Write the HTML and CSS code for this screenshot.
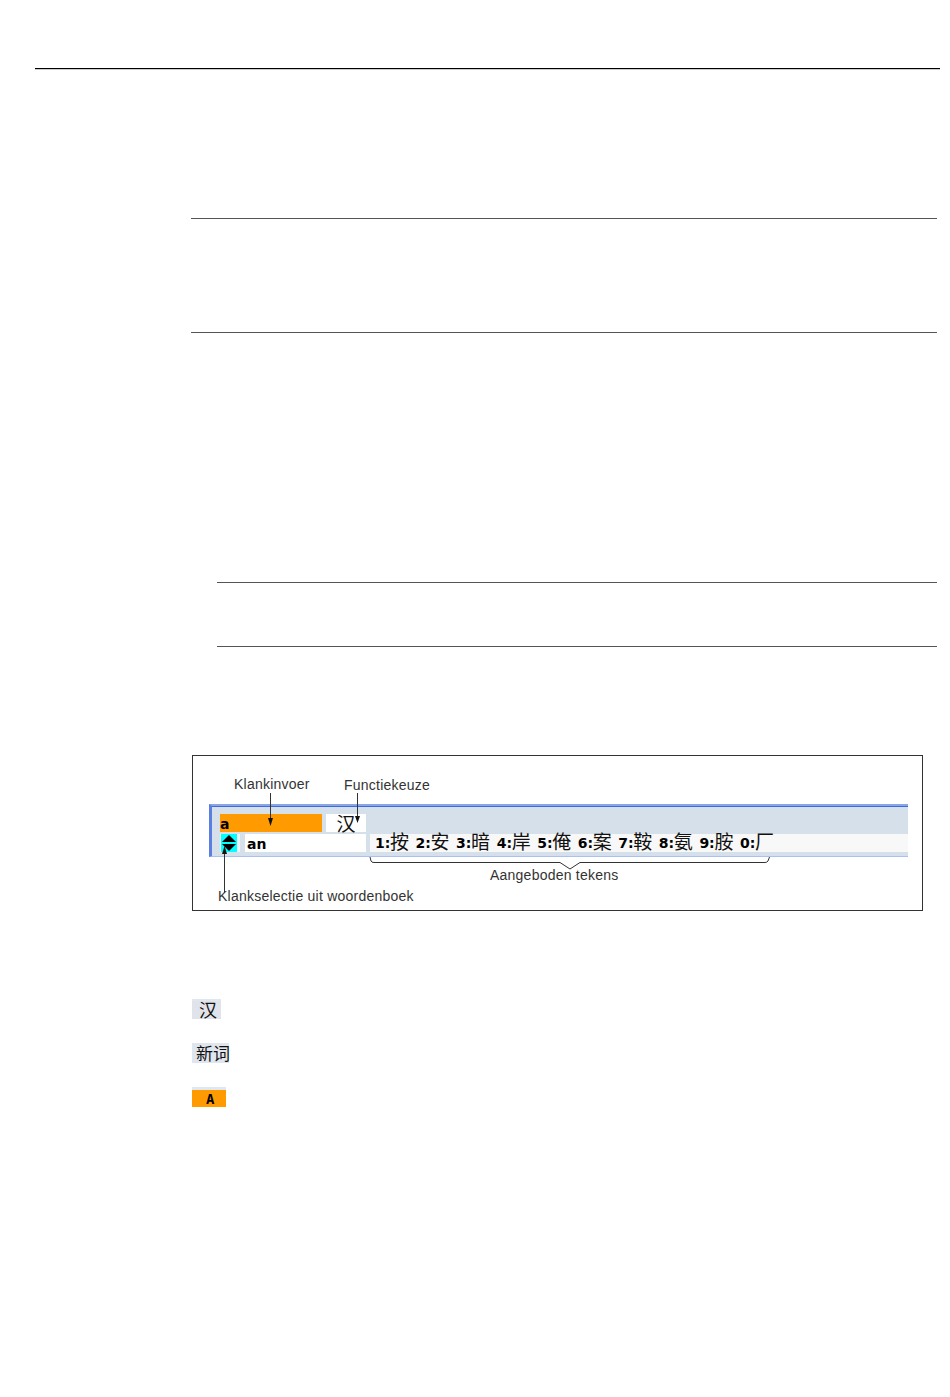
FILE: index.html
```html
<!DOCTYPE html>
<html lang="nl">
<head>
    <meta charset="UTF-8">
    <title>Klankinvoer</title>
    <link rel="stylesheet" href="styles.css">
</head>
<body>
    <hr class="rule rule-top">
    <div class="content">
        <hr class="rule rule-a">
        <hr class="rule rule-b">
        <hr class="rule rule-c">
        <hr class="rule rule-d">

        <div class="figure">
            <div class="ime-bar">
                <div class="ime-row">
                    <div class="pinyin-input">a</div>
                    <div class="func-select">汉</div>
                </div>
                <div class="ime-row ime-row-low">
                    <div class="spin-cell">
                        <svg class="spin" width="16" height="18" viewBox="0 0 16 18">
                            <rect width="16" height="18" fill="#00ffff"/>
                            <path d="M8 1 15 8H1Z" fill="#000"/>
                            <path d="M1 10H15L8 17Z" fill="#000"/>
                        </svg>
                    </div>
                    <div class="sound-field">an</div>
                    <div class="candidates">
                        <span class="cand"><b>1:</b>按</span>
                        <span class="cand"><b>2:</b>安</span>
                        <span class="cand"><b>3:</b>暗</span>
                        <span class="cand"><b>4:</b>岸</span>
                        <span class="cand"><b>5:</b>俺</span>
                        <span class="cand"><b>6:</b>案</span>
                        <span class="cand"><b>7:</b>鞍</span>
                        <span class="cand"><b>8:</b>氨</span>
                        <span class="cand"><b>9:</b>胺</span>
                        <span class="cand"><b>0:</b>厂</span>
                    </div>
                </div>
            </div>

            <svg class="callouts" width="730" height="155" viewBox="0 0 730 155">
                <g fill="none" stroke="#333" stroke-width="1">
                    <path d="M77.500 37V64"/>
                    <path d="M164.500 37V61"/>
                    <path d="M31.500 137V98"/>
                    <path d="M177 101 178 105Q178.500 106.500 181 106.500H367L377 113 387 106.500H572Q574 106.500 575 105L576.500 101"/>
                </g>
                <g fill="#111">
                    <path d="M75 62H80L77.500 70Z"/>
                    <path d="M162 60H167L164.500 67Z"/>
                    <path d="M29 98H34L31.500 90Z"/>
                </g>
            </svg>

            <span class="label label-klank">Klankinvoer</span>
            <span class="label label-func">Functiekeuze</span>
            <span class="label label-tekens">Aangeboden tekens</span>
            <span class="label label-select">Klankselectie uit woordenboek</span>
        </div>

        <div class="key key-han"><span>汉</span></div>
        <div class="key key-word"><span>新词</span></div>
        <div class="key key-alpha"><span>A</span></div>
    </div>
</body>
</html>
```

FILE: styles.css
```css
html, body {
    margin: 0;
    background-color: #fff;
}
body {
    padding-top: 68px;
    height: 1329px;
    overflow: hidden;
    font-family: "Liberation Sans", "Noto Sans CJK SC", sans-serif;
    color: #333;
}
.rule {
    display: block;
    margin: 0;
    border: none;
    height: 1px;
    background-color: #555;
}
.rule-top {
    margin-left: 35px;
    width: 905px;
    background-color: #000;
    box-shadow: 0 1px 0 #ccc;
}
.content {
    margin-left: 191px;
    width: 746px;
}
.rule-a {
    margin-top: 149px;
}
.rule-b {
    margin-top: 113px;
}
.rule-c {
    margin-top: 249px;
    margin-left: 26px;
}
.rule-d {
    margin-top: 63px;
    margin-left: 26px;
}

/* figure */
.figure {
    position: relative;
    box-sizing: border-box;
    margin-top: 108px;
    margin-left: 1px;
    width: 731px;
    height: 156px;
    padding: 48px 14px 0 16px;
    border: 1px solid #333;
}
.ime-bar {
    box-sizing: border-box;
    height: 53px;
    padding: 8px 0 0 8px;
    background-color: #d6e0ea;
    border-top: 2px solid #8aa6e6;
    border-left: 3px solid #5b7fe0;
    border-bottom: 1px solid #a9c0f0;
    box-shadow: inset 0 1px 0 #3f6be0;
}
.ime-row {
    display: flex;
    height: 18px;
}
.ime-row-low {
    margin-top: 2px;
}
.pinyin-input {
    width: 102px;
    margin-right: 4px;
    background-color: #ff9b00;
    color: #000;
    font: bold 14px/20px "DejaVu Sans", sans-serif;
}
.func-select {
    width: 40px;
    background-color: #fff;
    color: #111;
    text-align: center;
    font: 400 19px/17px "Noto Sans CJK SC", sans-serif;
}
.spin-cell {
    width: 20px;
    padding-left: 1px;
    box-sizing: border-box;
    background-color: #f0f4f8;
}
.spin {
    display: block;
}
.sound-field {
    width: 119px;
    margin-left: 5px;
    padding-left: 2px;
    background-color: #fff;
    color: #000;
    font: bold 14px/20px "DejaVu Sans", sans-serif;
}
.candidates {
    display: flex;
    flex: 1;
    margin-left: 4px;
    padding-left: 5px;
    background-color: #f8f8f8;
    color: #111;
    font: 400 19px/14px "Noto Sans CJK SC", sans-serif;
}
.cand {
    display: flex;
    width: 40.550px;
}
.cand b {
    color: #000;
    font: bold 14px/18px "DejaVu Sans", sans-serif;
    width: 15px;
}

/* callouts lie over the bar */
.callouts {
    position: absolute;
    left: 0;
    top: 0;
}
.label {
    position: absolute;
    font-size: 14px;
    line-height: 16px;
    letter-spacing: 0.23px;
    white-space: nowrap;
}
.label-klank {
    left: 41px;
    top: 20px;
}
.label-func {
    left: 151px;
    top: 21px;
}
.label-tekens {
    left: 297px;
    top: 111px;
}
.label-select {
    left: 25px;
    top: 132px;
}

/* keys */
.key {
    display: flex;
    align-items: center;
    margin-left: 1px;
    height: 20px;
    box-sizing: border-box;
    color: #111;
    white-space: nowrap;
    font: 400 18px/20px "Noto Sans CJK SC", sans-serif;
}
.key-han {
    margin-top: 88px;
    width: 29px;
    padding-left: 7px;
    background-color: #e0e3ea;
    box-shadow: inset 0 2px 0 #dfe7f0;
}
.key-word {
    margin-top: 24px;
    width: 37px;
    padding-left: 4px;
    font-size: 17px;
    background-color: #e0e6ee;
}
.key-alpha {
    margin-top: 24px;
    width: 34px;
    padding-left: 14px;
    border-top: 3px solid #dfe7f0;
    background-color: #ff9b00;
    color: #000;
    font: bold 14px/16px "DejaVu Sans Mono", monospace;
}
```
